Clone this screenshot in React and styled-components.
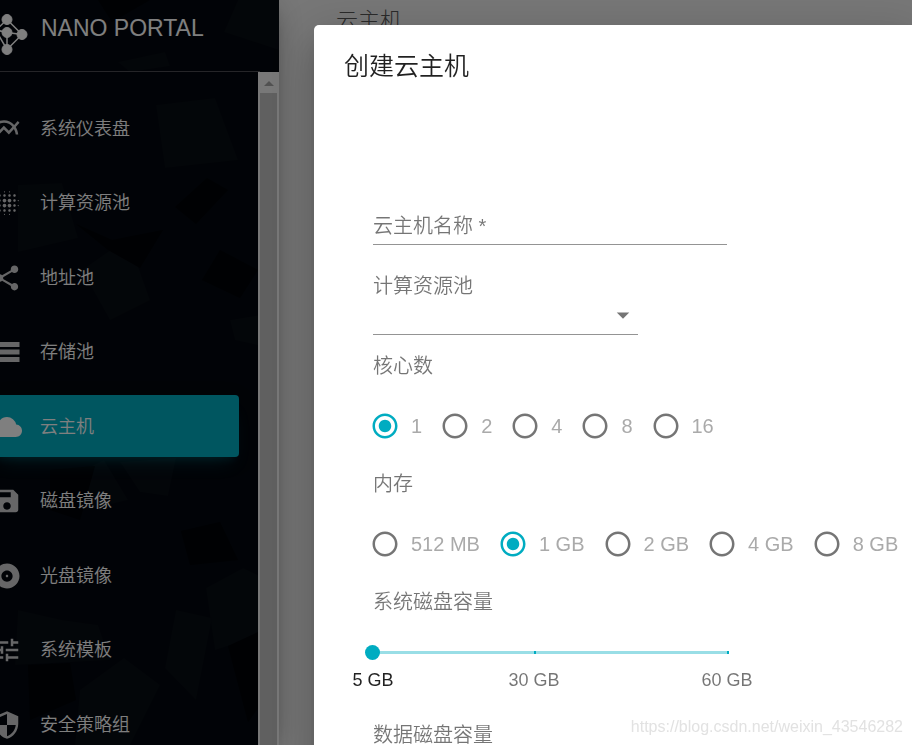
import React, { useState } from 'react'
import styled, { createGlobalStyle } from 'styled-components'
import {
    MdMultilineChart,
    MdBlurOn,
    MdShare,
    MdStorage,
    MdCloud,
    MdSave,
    MdAlbum,
    MdTune,
    MdSecurity,
    MdArrowDropDown,
    MdRadioButtonChecked,
    MdRadioButtonUnchecked
} from 'react-icons/md'

const accent = '#00acc1'

const GlobalStyle = createGlobalStyle`
    * {
        box-sizing: border-box;
    }
    body {
        margin: 0;
        background: #eee;
        font-family: "Liberation Sans", "Noto Sans CJK SC", sans-serif;
        font-weight: 350;
        overflow: hidden;
    }
`

const Page = styled.div`
    display: flex;
    height: 100vh;
`
const Sidebar = styled.aside`
    display: flex;
    flex-direction: column;
    flex: none;
    position: relative;
    width: 279px;
    background: #03070e;
    color: #fff;
    box-shadow: 0 10px 30px -12px rgba(0, 0, 0, 0.42), 0 4px 25px rgba(0, 0, 0, 0.12), 0 8px 10px -5px rgba(0, 0, 0, 0.2);
`
const Texture = styled.svg`
    position: absolute;
    inset: 0;
    width: 100%;
    height: 100%;
`
const Brand = styled.a`
    display: flex;
    position: relative;
    align-items: center;
    gap: 12px;
    height: 72px;
    margin-right: 19px;
    padding-bottom: 15px;
    border-bottom: 1px solid #4a4a50;
    color: #fff;
    font-size: 23px;
    font-weight: 400;
    line-height: 32px;
    text-decoration: none;
`
const NavArea = styled.div`
    display: flex;
    position: relative;
    flex: 1;
    min-height: 0;
`
const Nav = styled.nav`
    flex: 1;
    padding: 25px 19px 0 0;
    overflow: hidden;
`
const NavList = styled.ul`
    margin: 0 0 0 -8px;
    padding: 0;
    list-style: none;
`
const NavItem = styled.li`
    margin-bottom: 12px;
    &:nth-child(even) {
        margin-bottom: 13px;
    }
`
const NavLink = styled.a`
    display: flex;
    align-items: center;
    gap: 18px;
    height: 62px;
    padding-top: 2px;
    border-radius: 4px;
    color: #fff;
    font-size: 18px;
    line-height: 30px;
    text-decoration: none;
    background: ${props => props.$active ? accent : 'transparent'};
    box-shadow: ${props => props.$active ? '0 12px 20px -10px rgba(0, 172, 193, 0.28), 0 4px 20px rgba(0, 0, 0, 0.12), 0 7px 8px -5px rgba(0, 172, 193, 0.2)' : 'none'};
    svg {
        flex: none;
        width: 30px;
        height: 30px;
        opacity: ${props => props.$active ? 1 : 0.8};
    }
`
const ScrollTrack = styled.div`
    display: flex;
    flex-direction: column;
    align-items: center;
    width: 21px;
    background: #f1f1f1;
`
const ScrollArrow = styled.div`
    flex: none;
    width: 0;
    height: 14px;
    margin-bottom: 7px;
    border: 5px solid transparent;
    border-top-width: 9px;
    border-bottom-color: #a3a3a3;
`
const ScrollThumb = styled.div`
    flex: 1;
    width: 17px;
    background: #c1c1c1;
`
const Main = styled.main`
    flex: 1;
    padding: 6px 57px;
`
const PageTitle = styled.h2`
    margin: 0;
    color: #555;
    font-size: 22px;
    font-weight: 300;
    line-height: 30px;
`
const Backdrop = styled.div`
    display: flex;
    position: fixed;
    inset: 0;
    padding: 25px 0 0 314px;
    background: rgba(0, 0, 0, 0.5);
    overflow: hidden;
`
const Dialog = styled.section`
    flex: 1;
    min-width: 0;
    height: 800px;
    padding: 21px 0 0 30px;
    border-radius: 5px 0 0 0;
    background: #fff;
    box-shadow: 0 11px 15px -7px rgba(0, 0, 0, 0.2), 0 24px 38px 3px rgba(0, 0, 0, 0.14), 0 9px 46px 8px rgba(0, 0, 0, 0.12);
`
const DialogTitle = styled.h2`
    margin: 0;
    color: rgba(0, 0, 0, 0.87);
    font-size: 25px;
    font-weight: 350;
    line-height: 40px;
`
const Form = styled.form`
    padding: 119px 0 0 29px;
    color: rgba(0, 0, 0, 0.54);
    font-size: 20px;
    line-height: 30px;
`
const TextField = styled.div`
    position: relative;
    max-width: 354px;
    margin-bottom: 26px;
    label {
        position: absolute;
        top: 6px;
        left: 0;
        pointer-events: none;
    }
`
const TextInput = styled.input`
    display: block;
    width: 100%;
    height: 40px;
    padding: 8px 0;
    border: 0;
    border-bottom: 1px solid #949494;
    outline: 0;
    background: transparent;
    font: inherit;
`
const SelectField = styled.div`
    position: relative;
    max-width: 265px;
    margin-bottom: 16px;
    svg {
        position: absolute;
        right: 0;
        bottom: 5px;
        width: 30px;
        height: 30px;
        pointer-events: none;
    }
`
const Select = styled.select`
    display: block;
    width: 100%;
    height: 34px;
    border: 0;
    border-bottom: 1px solid #949494;
    outline: 0;
    appearance: none;
    background: transparent;
    font: inherit;
`
const FieldLabel = styled.label`
    display: block;
`
const RadioGroup = styled.fieldset`
    min-width: 0;
    margin: 0;
    padding: 0;
    border: 0;
    legend {
        padding: 0;
    }
`
const RadioRow = styled.div`
    display: flex;
    gap: 18px;
    height: 88px;
    margin-left: -3px;
    padding-top: 2px;
    align-items: center;
`
const RadioLabel = styled.label`
    display: flex;
    position: relative;
    align-items: center;
    gap: 11px;
    color: #aaa;
    font-weight: 400;
    white-space: nowrap;
    input {
        position: absolute;
        left: 0;
        width: 30px;
        height: 30px;
        margin: 0;
        opacity: 0;
    }
    svg {
        flex: none;
        width: 30px;
        height: 30px;
        color: ${props => props.$checked ? accent : '#757575'};
    }
`
const SliderWrap = styled.div`
    position: relative;
    max-width: 356px;
    height: 103px;
    padding-top: 28px;
`
const Range = styled.input`
    display: block;
    width: calc(100% + 15px);
    height: 15px;
    margin: 0 -8px;
    appearance: none;
    background: transparent;
    &::-webkit-slider-runnable-track {
        height: 3px;
        margin: 0 8px;
        background: #99dee6;
    }
    &::-webkit-slider-thumb {
        width: 15px;
        height: 15px;
        margin: -6px -8px;
        border-radius: 50%;
        appearance: none;
        background: ${accent};
    }
`
const Tick = styled.span`
    position: absolute;
    top: 34px;
    width: 2px;
    height: 3px;
    background: ${accent};
`
const TickLabel = styled.span`
    position: absolute;
    top: 48px;
    transform: translateX(-50%);
    color: ${props => props.$active ? 'rgba(0, 0, 0, 0.87)' : 'rgba(0, 0, 0, 0.54)'};
    font-size: 18px;
    font-weight: 400;
    white-space: nowrap;
`
const Watermark = styled.span`
    position: fixed;
    right: 9px;
    bottom: 8px;
    color: #e2e2e2;
    font-size: 16px;
    font-weight: 400;
    line-height: 20px;
`

const links = [
    { text: '系统仪表盘', Icon: MdMultilineChart },
    { text: '计算资源池', Icon: MdBlurOn },
    { text: '地址池', Icon: MdShare },
    { text: '存储池', Icon: MdStorage },
    { text: '云主机', Icon: MdCloud },
    { text: '磁盘镜像', Icon: MdSave },
    { text: '光盘镜像', Icon: MdAlbum },
    { text: '系统模板', Icon: MdTune },
    { text: '安全策略组', Icon: MdSecurity }
]
const coreOptions = ['1', '2', '4', '8', '16']
const memoryOptions = ['512 MB', '1 GB', '2 GB', '4 GB', '8 GB']
const minDisk = 5
const maxDisk = 60
const diskMarks = [5, 30, 60]

const Logo = () => (
    <svg width="29" height="56" viewBox="0 0 29 56" fill="#fff" stroke="#fff" aria-hidden="true">
        <path d="M7 19.5L22 34.5M7 32.5L22 34.5M7 32.5V49M7 49.5L22 34.5M7 19.5L-8 34M7 32.5L-8 29M7 49.5L-6 27" fill="none" strokeWidth="1.5" />
        <circle cx="7" cy="19.5" r="5" />
        <circle cx="7" cy="32.5" r="5" />
        <circle cx="22" cy="34.5" r="5" />
        <circle cx="7" cy="49.5" r="5" />
    </svg>
)

const SidebarTexture = () => (
    <Texture viewBox="0 0 279 745" preserveAspectRatio="none" aria-hidden="true">
        <g fill="#070c13">
            <path d="M238 0L279 0V50L224 32z" />
            <path d="M118 62L165 52L170 66L130 72z" />
            <path d="M18 185L62 183L78 238L18 252z" />
            <path d="M82 270L128 238L150 300L110 320z" />
            <path d="M156 105L215 98L238 160L165 168z" />
            <path d="M230 320L279 312V350L235 340z" />
            <path d="M84 470L104 460L128 500L86 510z" />
            <path d="M120 462L176 458L168 496L140 492z" />
            <path d="M206 588L243 568L279 585V630L215 650z" />
            <path d="M176 610L212 618L196 700L165 668z" />
            <path d="M18 610L62 620L98 625L110 660L15 665z" />
            <path d="M80 690L124 658L160 685L130 745H75z" />
        </g>
        <g fill="#010307">
            <path d="M175 207L207 178L228 190L196 224z" />
            <path d="M76 224L112 240L163 230L140 268L108 250z" />
            <path d="M202 280L220 250L258 270L240 298z" />
            <path d="M98 0L150 0L112 22z" />
            <path d="M181 531L220 522L238 560L190 565z" />
            <path d="M228 646L258 632L279 680L248 722z" />
            <path d="M28 665L70 663L76 700L30 720z" />
            <path d="M50 470L95 466L80 520L50 510z" />
        </g>
    </Texture>
)

const RadioField = ({ legend, name, options, value, onChange }) => (
    <RadioGroup>
        <legend>{legend}</legend>
        <RadioRow>
            {options.map(option => (
                <RadioLabel key={option} $checked={option === value}>
                    <input
                        type="radio"
                        name={name}
                        value={option}
                        checked={option === value}
                        onChange={() => onChange(option)}
                    />
                    {option === value ? <MdRadioButtonChecked /> : <MdRadioButtonUnchecked />}
                    {option}
                </RadioLabel>
            ))}
        </RadioRow>
    </RadioGroup>
)

const DiskSlider = ({ value, onChange }) => (
    <SliderWrap>
        {diskMarks.slice(1).map(mark => (
            <Tick key={mark} style={{ left: `calc(${(mark - minDisk) / (maxDisk - minDisk)} * (100% - 2px))` }} />
        ))}
        <Range
            id="system-disk"
            type="range"
            min={minDisk}
            max={maxDisk}
            value={value}
            onChange={e => onChange(Number(e.target.value))}
        />
        {diskMarks.map(mark => (
            <TickLabel
                key={mark}
                $active={mark <= value}
                style={{ left: `calc(${(mark - minDisk) / (maxDisk - minDisk)} * (100% - 2px))` }}
            >
                {mark} GB
            </TickLabel>
        ))}
    </SliderWrap>
)

const App = () => {
    const [cores, setCores] = useState('1')
    const [memory, setMemory] = useState('1 GB')
    const [disk, setDisk] = useState(5)
    return (
        <Page>
            <GlobalStyle />
            <Sidebar>
                <SidebarTexture />
                <Brand href="#">
                    <Logo />
                    NANO PORTAL
                </Brand>
                <NavArea>
                    <Nav>
                        <NavList>
                            {links.map(({ text, Icon }) => (
                                <NavItem key={text}>
                                    <NavLink href="#" $active={text === '云主机'}>
                                        <Icon />
                                        {text}
                                    </NavLink>
                                </NavItem>
                            ))}
                        </NavList>
                    </Nav>
                    <ScrollTrack>
                        <ScrollArrow />
                        <ScrollThumb />
                    </ScrollTrack>
                </NavArea>
            </Sidebar>
            <Main>
                <PageTitle>云主机</PageTitle>
            </Main>
            <Backdrop>
                <Dialog role="dialog" aria-labelledby="dialog-title">
                    <DialogTitle id="dialog-title">创建云主机</DialogTitle>
                    <Form>
                        <TextField>
                            <TextInput id="name" type="text" required />
                            <label htmlFor="name">云主机名称 *</label>
                        </TextField>
                        <FieldLabel htmlFor="pool">计算资源池</FieldLabel>
                        <SelectField>
                            <Select id="pool" />
                            <MdArrowDropDown />
                        </SelectField>
                        <RadioField legend="核心数" name="cores" options={coreOptions} value={cores} onChange={setCores} />
                        <RadioField legend="内存" name="memory" options={memoryOptions} value={memory} onChange={setMemory} />
                        <FieldLabel htmlFor="system-disk">系统磁盘容量</FieldLabel>
                        <DiskSlider value={disk} onChange={setDisk} />
                        <FieldLabel as="div">数据磁盘容量</FieldLabel>
                    </Form>
                </Dialog>
                <Watermark>https://blog.csdn.net/weixin_43546282</Watermark>
            </Backdrop>
        </Page>
    )
}

export default App
